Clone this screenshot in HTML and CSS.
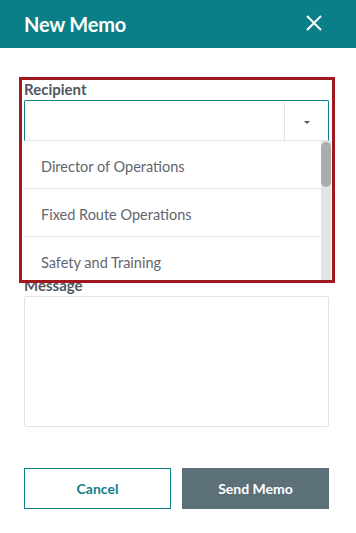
FILE: index.html
```
<!DOCTYPE HTML>
<html lang="en">
<head>
	<meta charset="utf-8">
	<link rel="stylesheet" href="styles.css">
</head>
<body>
	<div class="topbar">
		<h1>New Memo</h1>
		<a href="javascript:;" class="close">
			<svg width="16" height="16" viewBox="0 0 16 16"><path d="M1 1L15 15M15 1L1 15" stroke="#fff" stroke-width="2" fill="none"/></svg>
		</a>
	</div>
	<form class="memo">
		<div class="field recipient">
			<label>Recipient</label>
			<div class="select">
				<span class="select-value"></span>
				<span class="select-arrow"><i></i></span>
			</div>
			<div class="options">
				<ul>
					<li>Director of Operations</li>
					<li>Fixed Route Operations</li>
					<li>Safety and Training</li>
				</ul>
				<div class="scrollbar"><span></span></div>
			</div>
			<div class="highlight"></div>
		</div>
		<div class="field message">
			<label>Message</label>
			<textarea></textarea>
		</div>
		<div class="actions">
			<button type="button" class="btn cancel">Cancel</button>
			<button type="button" class="btn send">Send Memo</button>
		</div>
	</form>
</body>
</html>
```
FILE: styles.css
```
*{padding:0;margin:0;box-sizing:border-box;}
body{font-family:Lato,"Noto Sans",sans-serif;background:#fff;width:356px;}
.topbar{height:48px;background:#0b7f88;display:flex;align-items:center;justify-content:space-between;padding:0 34px 0 24px;}
.topbar h1{color:#fff;font-size:20px;font-weight:700;letter-spacing:-0.2px;}
.close{display:block;width:16px;height:16px;margin-top:-2px;}
.close svg{display:block;}

.memo{padding:31px 27px 0 24px;}
.field label{display:block;font-size:15px;line-height:21px;font-weight:700;color:#4f575f;}
.recipient{position:relative;}
.select{height:41px;display:flex;border:1px solid #0e8089;border-bottom-color:#dfe5e8;border-radius:2px 2px 0 0;}
.select-value{flex:1;}
.select-arrow{width:44px;border-left:1px solid #dfe5e8;display:flex;align-items:center;justify-content:center;}
.select-arrow i{display:block;width:0;height:0;border-left:3px solid transparent;border-right:3px solid transparent;border-top:3px solid #555;margin-top:3px;}

.options{position:absolute;left:0;top:62px;width:307px;height:142px;background:#fff;display:flex;overflow:hidden;z-index:2;}
.options ul{list-style:none;flex:1;}
.options li{height:48px;padding-top:5px;line-height:42px;padding-left:17px;font-size:14.5px;color:#5f666e;border-bottom:1px solid #dfe5e8;}
.scrollbar{width:10px;background:#e4e4e4;padding-top:1px;}
.scrollbar span{display:block;height:45px;background:#acacac;border-radius:5px;}

.highlight{position:absolute;left:-5px;top:-2px;width:316px;height:206px;border:3px solid #a1171e;z-index:3;}

.message{margin-top:134px;}
.message textarea{display:block;width:305px;height:131px;border:1px solid #dde3e8;border-radius:2px;resize:none;}

.actions{display:flex;gap:11px;margin-top:41px;}
.btn{width:147px;height:41px;font-family:Lato,"Noto Sans",sans-serif;font-size:14px;font-weight:700;cursor:pointer;}
.cancel{background:#fff;border:1px solid #0e8089;color:#0e8089;}
.send{background:#5c707a;border:none;color:#fff;}
```
